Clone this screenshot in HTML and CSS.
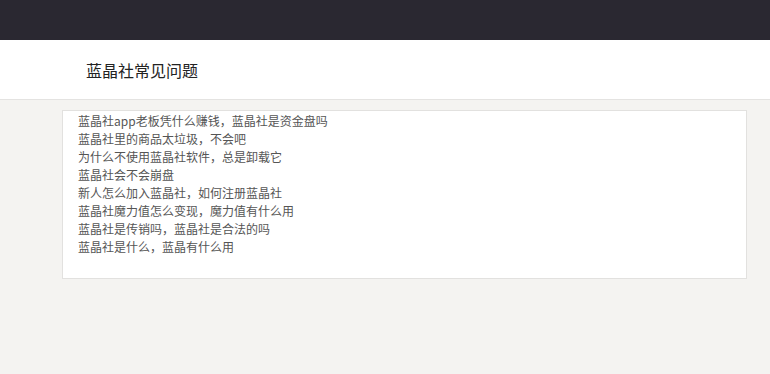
FILE: index.html
```html
<!DOCTYPE html>
<html lang="zh-CN">
<head>
    <meta charset="UTF-8">
    <meta name="viewport" content="width=device-width, initial-scale=1.0">
    <title>蓝晶社常见问题</title>
    <link rel="stylesheet" href="styles.css">
</head>
<body>
    <div class="topbar"></div>
    <div class="header">
        <h1 class="title">蓝晶社常见问题</h1>
    </div>
    <div class="main">
        <ul class="faq">
            <li><a href="#">蓝晶社app老板凭什么赚钱，蓝晶社是资金盘吗</a></li>
            <li><a href="#">蓝晶社里的商品太垃圾，不会吧</a></li>
            <li><a href="#">为什么不使用蓝晶社软件，总是卸载它</a></li>
            <li><a href="#">蓝晶社会不会崩盘</a></li>
            <li><a href="#">新人怎么加入蓝晶社，如何注册蓝晶社</a></li>
            <li><a href="#">蓝晶社魔力值怎么变现，魔力值有什么用</a></li>
            <li><a href="#">蓝晶社是传销吗，蓝晶社是合法的吗</a></li>
            <li><a href="#">蓝晶社是什么，蓝晶有什么用</a></li>
        </ul>
    </div>
</body>
</html>
```

FILE: styles.css
```css
body {
    margin: 0;
    background-color: #f4f3f1;
    font-family: "Noto Sans CJK SC", "Liberation Sans", sans-serif;
    color: #555;
}

.topbar {
    height: 40px;
    background-color: #2a2831;
}

.header {
    height: 59px;
    background-color: #fff;
    border-bottom: 1px solid #e4e3e1;
    display: flex;
    align-items: center;
    padding-left: 86px;
}

.title {
    margin: 0;
    font-size: 16px;
    font-weight: normal;
    color: #222;
    line-height: 20px;
}

.main {
    padding: 10px 23px 0 62px;
}

.faq {
    list-style: none;
    margin: 0;
    padding: 1px 15px 0;
    height: 166px;
    background-color: #fff;
    border: 1px solid #e2e1df;
}

.faq li {
    font-size: 12px;
    line-height: 18px;
}

.faq a {
    color: #555;
    text-decoration: none;
}
```
